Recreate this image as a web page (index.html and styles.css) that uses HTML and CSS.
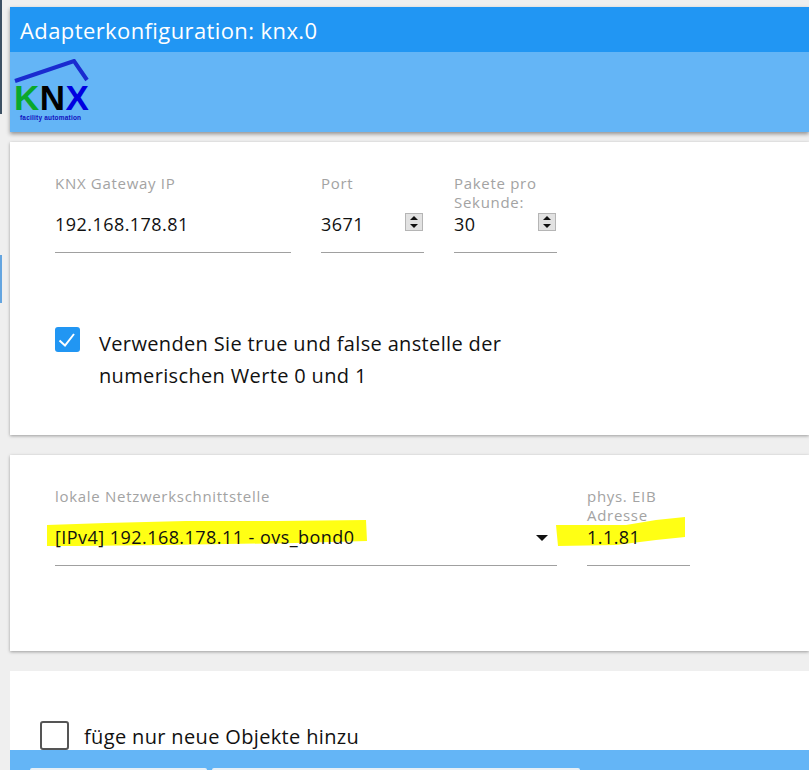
FILE: index.html
```html
<!DOCTYPE html>
<html lang="de">
<head>
<meta charset="utf-8">
<title>Adapterkonfiguration: knx.0</title>
<link rel="stylesheet" href="styles.css">
</head>
<body>
<div class="edge edge-dark"></div>
<div class="edge edge-blue"></div>
<main class="page">
  <header class="head">
    <h1 class="title">Adapterkonfiguration: knx.0</h1>
    <div class="logo-bar">
      <div class="logo">
        <svg class="roof" width="78" height="30" viewBox="0 0 78 30"><path d="M1 22 L60 2 L73 21" fill="none" stroke="#1a2bd0" stroke-width="4"/></svg>
        <div class="knx"><span class="k">K</span><span class="n">N</span><span class="x">X</span></div>
        <div class="tag">facility automation</div>
      </div>
    </div>
  </header>

  <section class="card card-a">
    <div class="row">
      <div class="field w236"><div class="label">KNX Gateway IP</div><div class="value">192.168.178.81</div></div>
      <div class="field w103"><div class="label">Port</div><div class="value">3671<span class="spin"><i class="up"></i><i class="down"></i></span></div></div>
      <div class="field w103"><div class="label tight">Pakete pro Sekunde:</div><div class="value">30<span class="spin"><i class="up"></i><i class="down"></i></span></div></div>
    </div>
    <div class="check check-a">
      <span class="box on"><svg width="25" height="25" viewBox="0 0 25 25"><path d="M4.5 13.5 L10 18.5 L19 7" fill="none" stroke="#fff" stroke-width="2"/></svg></span>
      <span class="check-text">Verwenden Sie true und false anstelle der<br>numerischen Werte 0 und 1</span>
    </div>
  </section>

  <section class="card card-b">
    <div class="row">
      <div class="field w502">
        <div class="label">lokale Netzwerkschnittstelle</div>
        <div class="value">
          <svg class="mark mark-a" width="322" height="28" viewBox="0 0 322 28"><path d="M1 5 L60 3 L140 1 L230 1 L320 0 L321 21 L250 23 L120 25 L30 26 L1 26 Z" fill="#ffff14"/></svg>
          <span class="txt">[IPv4] 192.168.178.11 - ovs_bond0</span><span class="caret"></span>
        </div>
      </div>
      <div class="field w103">
        <div class="label tight">phys. EIB Adresse</div>
        <div class="value">
          <svg class="mark mark-b" width="131" height="30" viewBox="0 0 131 30"><path d="M0 8 L70 8 L100 3 L129 0 L129 20 L100 23 L60 28 L2 29 Z" fill="#ffff14"/></svg>
          <span class="txt">1.1.81</span>
        </div>
      </div>
    </div>
  </section>

  <section class="card card-c">
    <div class="check check-c">
      <span class="box off"></span>
      <span class="check-text">füge nur neue Objekte hinzu</span>
    </div>
  </section>

  <footer class="foot">
    <span class="btn btn-a"></span>
    <span class="btn btn-b"></span>
  </footer>
</main>
</body>
</html>
```

FILE: styles.css
```css
* { box-sizing: border-box; }
html, body { margin: 0; height: 770px; overflow: hidden; }
body {
  background: #efefef;
  font-family: "Open Sans", "Noto Sans", sans-serif;
  color: #111;
  position: relative;
}
.edge { position: absolute; left: 0; width: 2px; }
.edge-dark { top: 0; height: 114px; background: #3c5064; }
.edge-blue { top: 255px; height: 48px; background: #64a5e0; }
.page { margin-left: 10px; padding-top: 7px; display: flex; flex-direction: column; }
.head { box-shadow: 0 2px 4px rgba(0,0,0,.4); }
.title {
  margin: 0; height: 45px; padding: 8px 10px 0;
  background: #2196f3; color: #fff;
  font-size: 22px; line-height: 30px; font-weight: 400; letter-spacing: .4px;
}
.logo-bar { height: 80px; background: #64b5f6; padding: 7px 0 0 4px; }
.logo { position: relative; width: 78px; height: 66px; }
.roof { position: absolute; left: 0; top: 0; }
.knx {
  position: absolute; left: 0; top: 26px;
  font-family: "Liberation Sans", sans-serif; font-weight: 700;
  font-size: 35px; line-height: 26px; letter-spacing: .5px; white-space: nowrap;
}
.k { color: #0aa82c; }
.n { color: #000; }
.x { color: #0000e0; }
.tag {
  position: absolute; left: 6px; top: 55px;
  font-family: "Liberation Sans", sans-serif; font-weight: 700;
  font-size: 6.5px; line-height: 8px; color: #1010c0; letter-spacing: .2px; white-space: nowrap;
}
.card { background: #fff; box-shadow: 0 1px 3px rgba(0,0,0,.35); }
.card-a { margin-top: 10px; height: 293px; padding: 32px 45px 0; }
.card-b { margin-top: 20px; height: 196px; padding: 32px 45px 0; }
.card-c { margin-top: 20px; height: 79px; box-shadow: none; padding: 50px 30px 0; }
.row { display: flex; gap: 30px; }
.field { position: relative; height: 79px; border-bottom: 1px solid #a0a0a0; }
.w236 { width: 236px; }
.w103 { width: 103px; }
.w502 { width: 502px; }
.label { height: 34px; font-size: 15px; line-height: 19px; color: #a3a3a3; letter-spacing: .7px; }
.value {
  position: relative; display: flex; align-items: center;
  height: 32px; font-size: 18px; line-height: 32px; color: #111; letter-spacing: .45px;
}
.txt { position: relative; }
.spin {
  position: absolute; right: 1px; top: 5px; width: 18px; height: 18px;
  border: 1px solid #b5b5b5; background: #e2e2e2;
  display: flex; flex-direction: column; align-items: center; justify-content: space-around;
}
.spin i { width: 0; height: 0; border-left: 4px solid transparent; border-right: 4px solid transparent; }
.spin .up { border-bottom: 4px solid #111; }
.spin .down { border-top: 4px solid #111; }
.caret {
  position: absolute; right: 9px; top: 14px; width: 0; height: 0;
  border-left: 6px solid transparent; border-right: 6px solid transparent; border-top: 6px solid #111;
}
.mark { position: absolute; }
.mark-a { left: -9px; top: -1px; }
.mark-b { left: -31px; top: -4px; }
.check { display: flex; align-items: flex-start; }
.check-a { margin: 74px 0 0; gap: 19px; }
.check-c { gap: 15px; }
.box { flex: none; width: 25px; height: 25px; border-radius: 3px; }
.box.on { background: #2196f3; }
.box.off { width: 29px; height: 29px; border: 2px solid #555; }
.check-text { font-size: 20px; line-height: 32px; letter-spacing: .35px; margin-top: 1px; }
.check-c .check-text { margin-top: 0; }
.foot { height: 20px; background: #64b5f6; display: flex; align-items: flex-end; gap: 5px; padding-left: 20px; }
.btn { height: 2px; background: #e8f0f6; border-radius: 2px 2px 0 0; }
.btn-a { width: 177px; }
.btn-b { width: 368px; }
```
